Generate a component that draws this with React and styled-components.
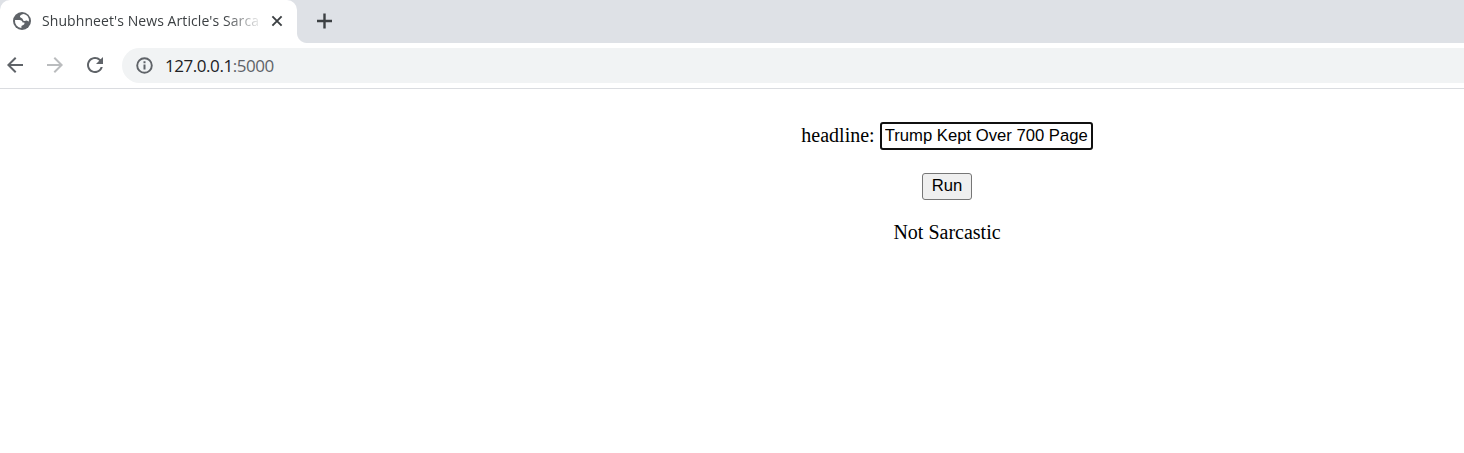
import React from 'react';
import styled, { createGlobalStyle } from 'styled-components';
import { MdArrowBack, MdArrowForward, MdRefresh } from 'react-icons/md';

const GlobalStyle = createGlobalStyle`
  body { margin: 0; background: #fff; overflow: hidden; }
  * { box-sizing: border-box; }
`;

const Browser = styled.div`
  height: 453px;
  overflow: hidden;
  background: #fff;
`;

const TabStrip = styled.div`
  display: flex;
  height: 43px;
  background: #dee1e6;
`;

const Tab = styled.div`
  display: flex;
  align-items: center;
  flex: none;
  width: 297px;
  height: 43px;
  padding: 0 0 1px 13px;
  background: #fff;
  border-radius: 10px 10px 0 0;
`;

const TabFoot = styled.div`
  align-self: flex-end;
  width: 10px;
  height: 10px;
  background: radial-gradient(circle at 100% 0, #dee1e6 9.5px, #fff 10.5px);
`;

const Title = styled.div`
  width: 218px;
  margin-left: 11px;
  white-space: nowrap;
  color: #3c4043;
  font: 14px/24px 'Open Sans', sans-serif;
  letter-spacing: 0.08px;
  mask-image: linear-gradient(to right, #000 182px, transparent 221px);
`;

const Glyph = styled.svg`
  display: block;
  flex: none;
`;

const CloseButton = styled.div`
  margin-left: 11px;
`;

const NewTab = styled.div`
  display: flex;
  align-items: center;
  padding-bottom: 1px;
`;

const Toolbar = styled.div`
  display: flex;
  align-items: center;
  height: 46px;
  border-bottom: 1px solid #dadce0;
`;

const NavButton = styled.div`
  display: flex;
  justify-content: center;
  flex: none;
  width: 40px;
  padding-bottom: 2px;
  margin-left: ${(p) => (p.$first ? '-5px' : '0')};
  color: ${(p) => (p.$disabled ? '#babcbe' : '#5f6368')};
  font-size: 24px;
`;

const AddressBar = styled.div`
  display: flex;
  align-items: center;
  flex: 1;
  height: 35px;
  margin-left: 7px;
  padding-left: 14px;
  border-radius: 18px 0 0 18px;
  background: #f1f3f4;
  color: #5f6368;
`;

const Url = styled.div`
  margin-left: 12px;
  font: 17px/24px 'Open Sans', sans-serif;
  letter-spacing: -0.45px;
`;

const Host = styled.span`
  color: #202124;
`;

const Page = styled.form`
  display: flex;
  flex-direction: column;
  align-items: center;
  width: 1894px;
  padding-top: 33px;
  color: #000;
  font: 20px/23px 'Liberation Serif', 'Times New Roman', serif;
`;

const Field = styled.label`
  display: flex;
  align-items: center;
  gap: 5px;
`;

const FieldName = styled.span`
  padding-bottom: 2px;
`;

const HeadlineInput = styled.input`
  width: 213px;
  height: 28px;
  padding: 0 3px;
  border: 2px solid #101010;
  border-radius: 3px;
  outline: none;
  background: #fff;
  color: #000;
  font: 16.67px 'Liberation Sans', Arial, sans-serif;
`;

const RunButton = styled.button`
  width: 50px;
  height: 27px;
  margin-top: 23px;
  padding: 0 0 1px;
  border: 1px solid #767676;
  border-radius: 3px;
  background: #efefef;
  color: #000;
  font: 16.67px 'Liberation Sans', Arial, sans-serif;
`;

const Result = styled.div`
  margin-top: 21px;
`;

function Globe() {
  return (
    <Glyph width="18" height="18" viewBox="0 0 18 18">
      <circle cx="9" cy="9" r="9" fill="#5f6368" />
      <path
        d="M10.8 2.1C9.4 2.2 7 3 6.9 4.6c0 1.4 2 1.3 2.6 2.1.6.9.3 2 1.7 2.3 1.2.2 1.8-.6 2.6-.4.8.2 1.1.8 2.1.8A7 7 0 0 0 10.8 2.1z"
        fill="#fff"
      />
      <path
        d="M2 8.1h4.3c1.9 0 3.2 1 3.3 2.5h1.7c.6 1.5-.3 2.4-1.5 2.6-.9.2-1.3.5-1.4 1.3V16A7 7 0 0 1 2 8.1z"
        fill="#fff"
      />
    </Glyph>
  );
}

function Cross() {
  return (
    <Glyph width="12" height="12" viewBox="0 0 12 12">
      <path d="M1.4 1.4l9.2 9.2M10.6 1.4l-9.2 9.2" stroke="#3c4043" strokeWidth="1.9" />
    </Glyph>
  );
}

function Plus() {
  return (
    <Glyph width="35" height="16" viewBox="0 0 35 16">
      <path d="M17.5 .5v15M10 8h15" stroke="#3c4043" strokeWidth="2.4" />
    </Glyph>
  );
}

function Info() {
  return (
    <Glyph width="17" height="17" viewBox="0 0 17 17">
      <circle cx="8.5" cy="8.5" r="7.3" fill="none" stroke="#5f6368" strokeWidth="1.9" />
      <path d="M8.5 4.3v2M8.5 7.6v5" stroke="#5f6368" strokeWidth="2" />
    </Glyph>
  );
}

export default function App() {
  return (
    <Browser>
      <GlobalStyle />
      <TabStrip>
        <Tab>
          <Globe />
          <Title>Shubhneet's News Article's Sarca</Title>
          <CloseButton>
            <Cross />
          </CloseButton>
        </Tab>
        <TabFoot />
        <NewTab>
          <Plus />
        </NewTab>
      </TabStrip>
      <Toolbar>
        <NavButton $first>
          <MdArrowBack />
        </NavButton>
        <NavButton $disabled>
          <MdArrowForward />
        </NavButton>
        <NavButton>
          <MdRefresh />
        </NavButton>
        <AddressBar>
          <Info />
          <Url>
            <Host>127.0.0.1</Host>:5000
          </Url>
        </AddressBar>
      </Toolbar>
      <Page>
        <Field>
          <FieldName>headline:</FieldName>
          <HeadlineInput defaultValue="Trump Kept Over 700 Page" />
        </Field>
        <RunButton type="button">Run</RunButton>
        <Result>Not Sarcastic</Result>
      </Page>
    </Browser>
  );
}
